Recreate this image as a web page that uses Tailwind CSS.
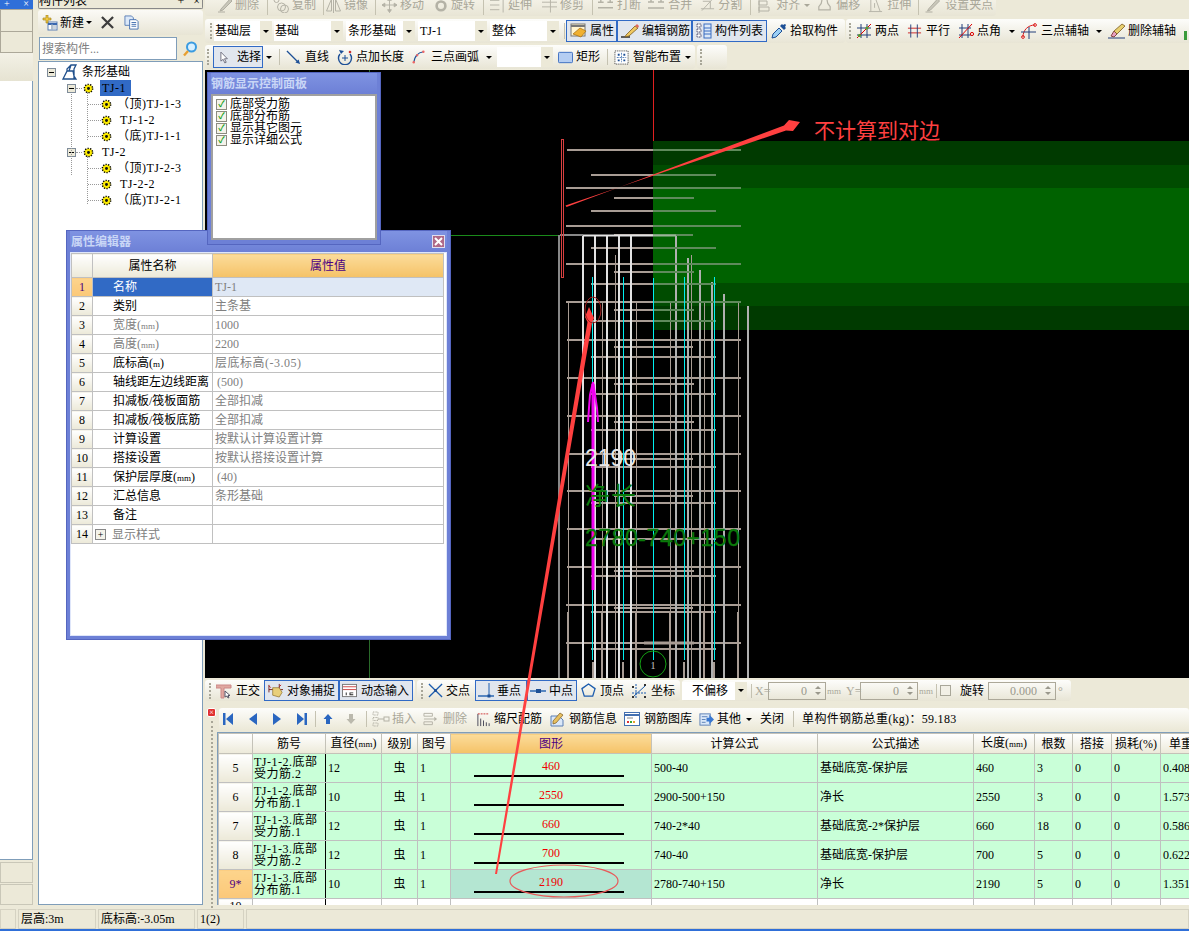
<!DOCTYPE html>
<html lang="zh-CN">
<head>
<meta charset="UTF-8">
<title>钢筋算量</title>
<script src="https://cdn.jsdelivr.net/npm/@tailwindcss/browser@4"></script>
</head>
<body class="relative w-[1189px] h-[931px] overflow-hidden bg-[#ece9d8] text-black text-[12px] leading-[14px] font-['Liberation_Serif','Noto_Sans_CJK_SC',serif]">

<!-- icon symbols -->
<svg class="hidden" width="0" height="0">
  <defs>
    <symbol id="gear" viewBox="0 0 12 12"><circle cx="6" cy="6" r="4.5" fill="#ffee00" stroke="#000" stroke-width="1.6" stroke-dasharray="1.4 1.4"/><circle cx="6" cy="6" r="1.6" fill="#111"/></symbol>
    <symbol id="minus" viewBox="0 0 9 9"><rect x=".5" y=".5" width="8" height="8" fill="#ece9d8" stroke="#7f8c9a"/><path d="M2 4.5h5" stroke="#000"/></symbol>
    <symbol id="root" viewBox="0 0 16 16"><path d="M1 15 5 7V5l4-4h5L12 5v7l2 3zM5 7h6l1 5v3M9 1 7 7" fill="#fff" stroke="#20508c" stroke-width="1.3"/></symbol>
    <symbol id="new" viewBox="0 0 16 16"><rect x="6" y="7" width="9" height="8" fill="#fff" stroke="#5a7fb5"/><path d="M6 9h9" stroke="#3a68b0" stroke-width="2"/><path d="M9 11h5M9 13h5M10 9v6" stroke="#9ab"/><path d="M4 0h2v3h3v2H6v3H4V5H1V3h3z" fill="#f0c840" stroke="#9a7a10" stroke-width=".6"/></symbol>
    <symbol id="del" viewBox="0 0 14 14"><path d="M1 1l12 12M13 1 1 13" stroke="#3c3c3c" stroke-width="2.4"/></symbol>
    <symbol id="copy" viewBox="0 0 16 16"><path d="M1 1h7l2 2v8H1z" fill="#dbe8f8" stroke="#5a7fb5"/><path d="M6 5h7l2 2v8H6z" fill="#fff" stroke="#4470b0"/><path d="M8 8h5M8 10h5M8 12h5" stroke="#4470b0"/></symbol>
    <symbol id="search" viewBox="0 0 16 16"><circle cx="9.5" cy="6" r="4.5" fill="#d8f0ff" stroke="#3a9be0" stroke-width="2"/><path d="M6 10 2 14.5" stroke="#e8a030" stroke-width="2.4"/></symbol>
    <symbol id="cursor" viewBox="0 0 10 14"><path d="M1 1v10l2.5-2 1.8 4 1.6-.7L5 8.4h3.2z" fill="#fff" stroke="#667"/></symbol>
    <symbol id="line" viewBox="0 0 16 16"><path d="M1 1 13 13" stroke="#1c4f96" stroke-width="1.4"/><path d="M15 15l-5-1.6 3.4-3.4z" fill="#1c4f96"/></symbol>
    <symbol id="ptlen" viewBox="0 0 16 16"><path d="M3 5a6.5 6.5 0 1 0 10 0" fill="none" stroke="#1c4f96" stroke-width="1.4"/><path d="M2 1l5 1-3 3z" fill="#1c4f96"/><path d="M8 6v6M5 9h6" stroke="#1c4f96"/><circle cx="13" cy="3" r="1.3" fill="#c33"/></symbol>
    <symbol id="arc" viewBox="0 0 16 16"><path d="M2 14C3 7 7 3 13 2" fill="none" stroke="#1c4f96" stroke-width="1.3"/><circle cx="2" cy="14" r="1.4" fill="#e66"/><circle cx="6" cy="6" r="1.3" fill="#e66"/><circle cx="13" cy="2" r="1.4" fill="#e66"/></symbol>
    <symbol id="rect" viewBox="0 0 16 16"><rect x=".5" y="2.5" width="15" height="11" rx="1" fill="#b4cdf2" stroke="#3a6cc0"/></symbol>
    <symbol id="smart" viewBox="0 0 16 16"><rect x="1" y="1" width="14" height="14" fill="#fff" stroke="#333" stroke-dasharray="1 1"/><path d="M8 3v10M3 8h10" stroke="#5580b8" stroke-dasharray="2 1"/><path d="M4 4h2v2H4zM10 4h2v2h-2zM4 10h2v2H4zM10 10h2v2h-2z" fill="#1c4f96"/></symbol>
    <symbol id="prop" viewBox="0 0 18 16"><rect x="1" y="1" width="14" height="12" fill="#fff4d0" stroke="#777"/><path d="M1 3h14" stroke="#777" stroke-width="2"/><path d="M3 11 10 5l6 3-5 6z" fill="#f0b030" stroke="#a06a10" stroke-width=".7"/></symbol>
    <symbol id="edit" viewBox="0 0 20 16"><path d="M1 14h9" stroke="#222" stroke-width="1.4"/><path d="M6 12 15 3l3 2-9 8-4 1z" fill="#f0c860" stroke="#7a5a20" stroke-width=".8"/><path d="M15 3l3 2 1-2-2-2z" fill="#e06a5a"/></symbol>
    <symbol id="list" viewBox="0 0 16 16"><path d="M1 1h4v3H1zM1 6h4v3H1zM1 11h4v3H1z" fill="#fff" stroke="#446" stroke-dasharray="1 .6"/><rect x="8" y="1" width="7" height="14" fill="#dbe8f8" stroke="#3a6cc0"/><path d="M8 5h7M8 8h7M8 11h7" stroke="#3a6cc0"/></symbol>
    <symbol id="pick" viewBox="0 0 16 16"><path d="M1 15l1-4 6-6 3 3-6 6z" fill="#9cd0f5" stroke="#1c4f96"/><path d="M9 3l4 4 2-2-1-1 1-2-1-1-2 1-1-1z" fill="#1c4f96"/></symbol>
    <symbol id="two" viewBox="0 0 16 16"><path d="M1 5h14M1 12h14M5 1v14M11 1v14" stroke="#223e7a"/><path d="M1 15 15 1" stroke="#d00"/><circle cx="3.5" cy="12.5" r="1.6" fill="#5a9a2a"/><circle cx="11" cy="5" r="1.6" fill="#5a9a2a"/></symbol>
    <symbol id="par" viewBox="0 0 16 16"><path d="M1 5h14M1 10h14" stroke="#c22"/><path d="M4 1v14M11 1v14" stroke="#223e7a"/></symbol>
    <symbol id="ang" viewBox="0 0 16 16"><path d="M1 5h12M1 12h12M4 1v14M10 1v14" stroke="#223e7a"/><path d="M1 15 14 1" stroke="#d00"/><circle cx="14" cy="11" r="1.6" fill="none" stroke="#d00"/></symbol>
    <symbol id="ax3" viewBox="0 0 16 16"><path d="M2 14C2 7 7 2 14 2" fill="none" stroke="#d22"/><path d="M0 9h15M8 4v12" stroke="#223e7a"/><circle cx="2" cy="14" r="1.4" fill="none" stroke="#d22"/><circle cx="14" cy="2" r="1.4" fill="none" stroke="#d22"/></symbol>
    <symbol id="erase" viewBox="0 0 18 16"><path d="M0 15h17" stroke="#223e7a"/><path d="M3 13l3-5 3 3-3 3z" fill="#e8a0c0" stroke="#844"/><path d="M6 8l8-7 3 2-8 8z" fill="#e8d070" stroke="#7a5a20" stroke-width=".8"/></symbol>
    <symbol id="ortho" viewBox="0 0 16 16"><path d="M0 2h15v3H8v10H5V5H0z" fill="#e0a8a0" stroke="#c88"/><path d="M9 8v6l2-1 1 2 1-.5-1-2h2z" fill="#fff" stroke="#556"/></symbol>
    <symbol id="snap" viewBox="0 0 16 16"><path d="M1 2v8M12 1v6M1 7h15" stroke="#7a2222"/><path d="M5 5l7 0 3 5-3 5-7-2z" fill="#e8cf7a" stroke="#8a6a20" stroke-width=".7"/><path d="M1 3l2 2M14 2l-2 2" stroke="#b22"/></symbol>
    <symbol id="dyn" viewBox="0 0 16 16"><rect x=".5" y="1.5" width="15" height="13" fill="#fff" stroke="#777"/><path d="M1 4h14M1 7h14" stroke="#c44"/><path d="M4 10h1v3H4zM8 10h4v1H9v1h3v1H8z" fill="#222"/></symbol>
    <symbol id="cross" viewBox="0 0 16 16"><path d="M1 1l14 14M15 1 1 15" stroke="#1c5cae" stroke-width="1.4"/><rect x="6.5" y="6.5" width="3" height="3" fill="#1c4f96"/></symbol>
    <symbol id="perp" viewBox="0 0 16 16"><path d="M0 13h16" stroke="#1c5cae" stroke-width="1.4"/><path d="M11 0v14" stroke="#1c5cae"/><rect x="9.5" y="11.5" width="3" height="3" fill="#1c4f96"/></symbol>
    <symbol id="mid" viewBox="0 0 16 16"><path d="M0 8h16" stroke="#1c5cae" stroke-width="1.4"/><rect x="6" y="6" width="5" height="4" fill="#1c4f96"/></symbol>
    <symbol id="vert" viewBox="0 0 16 16"><path d="M8 1l7 5-2.5 8h-9L1 6z" fill="none" stroke="#1c5cae" stroke-width="1.4"/></symbol>
    <symbol id="coord" viewBox="0 0 16 16"><path d="M5 1v14M1 10h14" stroke="#1c5cae" stroke-dasharray="2 1"/><path d="M2 14 14 3" stroke="#1c5cae"/><path d="M1 3h2v2H1zM1 13h2v2H1zM13 1h2v2h-2zM13 13h2v2h-2z" fill="#333"/></symbol>
    <symbol id="first" viewBox="0 0 12 14"><path d="M1 1h2.5v12H1zM11 1v12L4 7z" fill="#2a66c0"/></symbol>
    <symbol id="prev" viewBox="0 0 10 14"><path d="M9 1v12L1 7z" fill="#2a66c0"/></symbol>
    <symbol id="next" viewBox="0 0 10 14"><path d="M1 1v12l8-6z" fill="#2a66c0"/></symbol>
    <symbol id="last" viewBox="0 0 12 14"><path d="M11 1H8.500v12H11zM1 1v12l7-6z" fill="#2a66c0"/></symbol>
    <symbol id="up" viewBox="0 0 10 12"><path d="M5 1l4.500 5H7v5H3V6H.5z" fill="#2a66c0"/></symbol>
    <symbol id="down" viewBox="0 0 10 12"><path d="M5 11l4.500-5H7V1H3v5H.5z" fill="#bbb9ad"/></symbol>
    <symbol id="ins" viewBox="0 0 18 16"><path d="M1 1h5v3H1zM1 12h5v3H1zM1 6.500h5v3H1z" fill="none" stroke="#b4b2a6" stroke-dasharray="1 .6"/><path d="M6 8h6" stroke="#b4b2a6"/><rect x="12" y="6" width="5" height="4" fill="none" stroke="#b4b2a6"/></symbol>
    <symbol id="rmv" viewBox="0 0 16 16"><path d="M1 2h9v3H1zM1 11h9v3H1z" fill="none" stroke="#b4b2a6"/><path d="M1 8h11" stroke="#b4b2a6"/><path d="M12 5.500 15 8l-3 2.500z" fill="#b4b2a6"/></symbol>
    <symbol id="scale" viewBox="0 0 16 16"><path d="M2 2v13M5 7v8M8 9v6M11 11v4M14 12v3" stroke="#445"/><path d="M2 2h12" stroke="#c33" stroke-dasharray="2 1"/></symbol>
    <symbol id="info" viewBox="0 0 16 16"><path d="M2 5h8l4 4v6H2z" fill="#dbe8f8" stroke="#5a7fb5"/><path d="M4 10 11 2l3 2-7 8-3 1z" fill="#e8c060" stroke="#7a5a20" stroke-width=".7"/></symbol>
    <symbol id="lib" viewBox="0 0 16 16"><rect x=".5" y="1.500" width="15" height="13" fill="#fff" stroke="#4470b0"/><path d="M1 4h14" stroke="#4470b0" stroke-width="2"/><path d="M3 7h6" stroke="#888"/><path d="M3 11h2" stroke="#d33" stroke-width="2"/><path d="M6 11h2" stroke="#3a3" stroke-width="2"/><path d="M9 11h2" stroke="#e8a030" stroke-width="2"/></symbol>
    <symbol id="other" viewBox="0 0 16 16"><rect x="1" y="2" width="11" height="12" fill="#dbe8f8" stroke="#5a7fb5"/><path d="M3 5h6M3 8h4M3 11h4" stroke="#5a7fb5"/><path d="M8 6h3V3l5 5-5 5v-3H8z" fill="#3a78d0"/></symbol>
    <symbol id="dis-pen" viewBox="0 0 16 16"><path d="M1 15h7M4 12 13 2l2 2-9 9-3 1z" fill="#c9c7ba" stroke="#b0aea2"/></symbol>
    <symbol id="dis-copy" viewBox="0 0 16 16"><circle cx="3" cy="3" r="2.500" fill="none" stroke="#b4b2a6"/><circle cx="8" cy="10" r="4" fill="none" stroke="#b4b2a6"/><circle cx="11" cy="12" r="4" fill="none" stroke="#b4b2a6"/></symbol>
    <symbol id="dis-mirror" viewBox="0 0 16 16"><path d="M8 0v16M6 14H1l5-12zM10 14h5L10 2z" fill="none" stroke="#b4b2a6"/></symbol>
    <symbol id="dis-move" viewBox="0 0 16 16"><path d="M8 0v16M0 8h16M8 0 6 3h4zM8 16l-2-3h4zM0 8l3-2v4zM16 8l-3-2v4z" fill="#b4b2a6" stroke="#b4b2a6"/></symbol>
    <symbol id="dis-rot" viewBox="0 0 16 16"><circle cx="8" cy="9" r="5" fill="none" stroke="#b4b2a6" stroke-width="3"/></symbol>
    <symbol id="dis-ext" viewBox="0 0 16 16"><path d="M0 3h10M0 8h10M0 13h10M14 0v16" stroke="#b4b2a6"/></symbol>
    <symbol id="dis-trim" viewBox="0 0 16 16"><path d="M0 5h16M0 10h16M9 0v16" stroke="#b4b2a6"/></symbol>
    <symbol id="dis-break" viewBox="0 0 16 16"><path d="M0 5h6M10 5h6M0 11h16M3 0v5M13 0v5" stroke="#b4b2a6" stroke-width="1.500"/></symbol>
    <symbol id="dis-split" viewBox="0 0 16 16"><path d="M1 12h14M3 4h8v8M14 1 2 14" stroke="#b4b2a6" fill="none"/></symbol>
    <symbol id="dis-align" viewBox="0 0 12 16"><path d="M1 0v16M1 4h8v4H1zM1 10h10v4H1z" stroke="#b4b2a6" fill="none"/></symbol>
    <symbol id="dis-off" viewBox="0 0 16 16"><path d="M5 1h6l1 5 3 4v4H1v-4l3-4z" fill="none" stroke="#b4b2a6" stroke-width="1.500"/></symbol>
    <symbol id="dis-str" viewBox="0 0 16 16"><path d="M1 15h14M3 15V1h5l5 14M7 6v5" stroke="#b4b2a6" fill="none"/></symbol>
  </defs>
</svg>

<div class="flex h-[908px]">
  <!-- far left docked pane -->
  <div class="w-[33px] shrink-0 flex flex-col">
    <div class="h-[9px] bg-[#2f6fd8] flex items-start justify-between px-[4px] text-white text-[10px] leading-[8px]"><span>+</span><span>×</span></div>
    <div class="h-[23px] border border-[#aca899] bg-[#ece9d8]"></div>
    <div class="h-[21px] border border-[#aca899] border-t-0 bg-[#ece9d8]"></div>
    <div class="h-[28px] bg-linear-to-b from-[#f3f1e6] to-[#e6e3d2]"></div>
    <div class="h-[779px] bg-white border-r border-b border-[#7f9db9]"></div>
    <div class="mt-[2px] h-[21px] border border-[#c9c7b8] bg-[#ece9d8]"></div>
    <div class="mt-[1px] h-[21px] border border-[#c9c7b8] bg-[#ece9d8]"></div>
  </div>

  <!-- component list pane -->
  <div class="ml-[5px] w-[165px] shrink-0 flex flex-col">
    <div class="h-[9px] overflow-hidden border border-t-0 border-[#888] rounded-b-[2px] bg-[#ece9d8] flex justify-between pr-[2px]">
      <span class="-mt-[6px]">构件列表</span><span class="-mt-[6px] flex gap-[9px]"><span>+</span><span>×</span></span>
    </div>
    <div class="mt-[1px] h-[25px] rounded-[3px] bg-linear-to-b from-[#fbfaf6] to-[#e8e5d5] flex items-center pl-[4px]">
      <svg class="w-[16px] h-[16px]"><use href="#new"/></svg>
      <span class="ml-[2px]">新建</span>
      <span class="ml-[2px] w-0 h-0 border-x-[3px] border-x-transparent border-t-[3px] border-t-black"></span>
      <svg class="ml-[9px] w-[13px] h-[13px]"><use href="#del"/></svg>
      <svg class="ml-[10px] w-[15px] h-[15px]"><use href="#copy"/></svg>
    </div>
    <div class="mt-[1px] h-[25px] flex items-center">
      <div class="w-[138px] h-[23px] ml-[1px] bg-white border border-[#7f9db9] text-[#808080] flex items-center pl-[2px] text-[12px]">搜索构件...</div>
      <div class="ml-[5px] w-[16px] h-[16px]"><svg class="w-[16px] h-[16px]"><use href="#search"/></svg></div>
    </div>
    <!-- tree -->
    <div class="relative flex-1 bg-white border border-[#7f9db9] pt-[2px] mb-[3px] tracking-[0.5px]">
      <div class="absolute left-[32px] top-[28px] h-[85px] border-l border-dotted border-[#999]"></div>
      <div class="absolute left-[48px] top-[30px] h-[48px] border-l border-dotted border-[#999]"></div>
      <div class="absolute left-[48px] top-[94px] h-[48px] border-l border-dotted border-[#999]"></div>
      <div class="h-[16px] flex items-center pl-[8px] tracking-normal"><svg class="w-[9px] h-[9px]"><use href="#minus"/></svg><svg class="ml-[6px] w-[16px] h-[16px]"><use href="#root"/></svg><span class="ml-[4px]">条形基础</span></div>
      <div class="h-[16px] flex items-center pl-[28px]"><svg class="relative w-[9px] h-[9px]"><use href="#minus"/></svg><span class="w-[6px] border-t border-dotted border-[#999]"></span><svg class="w-[11px] h-[11px] ml-[1px]"><use href="#gear"/></svg><span class="ml-[6px] w-[31px] h-[16px] bg-[#316ac5] flex items-center pl-[2px]">TJ-1</span></div>
      <div class="h-[16px] flex items-center pl-[49px]"><span class="w-[13px] border-t border-dotted border-[#999]"></span><svg class="w-[11px] h-[11px]"><use href="#gear"/></svg><span class="ml-[5px]">（顶)TJ-1-3</span></div>
      <div class="h-[16px] flex items-center pl-[49px]"><span class="w-[13px] border-t border-dotted border-[#999]"></span><svg class="w-[11px] h-[11px]"><use href="#gear"/></svg><span class="ml-[8px]">TJ-1-2</span></div>
      <div class="h-[16px] flex items-center pl-[49px]"><span class="w-[13px] border-t border-dotted border-[#999]"></span><svg class="w-[11px] h-[11px]"><use href="#gear"/></svg><span class="ml-[5px]">（底)TJ-1-1</span></div>
      <div class="h-[16px] flex items-center pl-[28px]"><svg class="w-[9px] h-[9px]"><use href="#minus"/></svg><span class="w-[6px] border-t border-dotted border-[#999]"></span><svg class="w-[11px] h-[11px] ml-[1px]"><use href="#gear"/></svg><span class="ml-[8px]">TJ-2</span></div>
      <div class="h-[16px] flex items-center pl-[49px]"><span class="w-[13px] border-t border-dotted border-[#999]"></span><svg class="w-[11px] h-[11px]"><use href="#gear"/></svg><span class="ml-[5px]">（顶)TJ-2-3</span></div>
      <div class="h-[16px] flex items-center pl-[49px]"><span class="w-[13px] border-t border-dotted border-[#999]"></span><svg class="w-[11px] h-[11px]"><use href="#gear"/></svg><span class="ml-[8px]">TJ-2-2</span></div>
      <div class="h-[16px] flex items-center pl-[49px]"><span class="w-[13px] border-t border-dotted border-[#999]"></span><svg class="w-[11px] h-[11px]"><use href="#gear"/></svg><span class="ml-[5px]">（底)TJ-2-1</span></div>
    </div>
  </div>

  <!-- main column -->
  <div class="ml-[2px] flex-1 min-w-0 flex flex-col">
    <!-- disabled edit toolbar -->
    <div class="h-[19px] shrink-0">
      <div class="w-[791px] h-[16px] overflow-hidden rounded-b-[3px] bg-linear-to-b from-[#f3f1e6] to-[#e8e5d5] text-[#a9a799] whitespace-nowrap">
        <div class="flex items-center h-[24px] -mt-[7px]">
          <svg class="ml-[12px] w-[16px] h-[16px] shrink-0"><use href="#dis-pen"/></svg><span class="ml-[2px]">删除</span><i class="ml-[8px] w-px h-[20px] bg-[#c5c2b1]"></i>
          <svg class="ml-[5px] w-[17px] h-[16px] shrink-0"><use href="#dis-copy"/></svg><span class="ml-[2px]">复制</span><i class="ml-[7px] w-px h-[20px] bg-[#c5c2b1]"></i>
          <svg class="ml-[1px] w-[17px] h-[16px] shrink-0"><use href="#dis-mirror"/></svg><span class="ml-[2px]">镜像</span><i class="ml-[7px] w-px h-[20px] bg-[#c5c2b1]"></i>
          <svg class="ml-[6px] w-[15px] h-[16px] shrink-0"><use href="#dis-move"/></svg><span class="ml-[3px]">移动</span>
          <svg class="ml-[10px] w-[14px] h-[16px] shrink-0"><use href="#dis-rot"/></svg><span class="ml-[3px]">旋转</span><i class="ml-[8px] w-px h-[20px] bg-[#c5c2b1]"></i>
          <svg class="ml-[6px] w-[15px] h-[16px] shrink-0"><use href="#dis-ext"/></svg><span class="ml-[3px]">延伸</span>
          <svg class="ml-[10px] w-[15px] h-[16px] shrink-0"><use href="#dis-trim"/></svg><span class="ml-[3px]">修剪</span><i class="ml-[8px] w-px h-[20px] bg-[#c5c2b1]"></i>
          <svg class="ml-[5px] w-[15px] h-[16px] shrink-0"><use href="#dis-break"/></svg><span class="ml-[4px]">打断</span>
          <svg class="ml-[7px] w-[16px] h-[16px] shrink-0"><use href="#dis-break"/></svg><span class="ml-[4px]">合并</span>
          <svg class="ml-[8px] w-[15px] h-[16px] shrink-0"><use href="#dis-split"/></svg><span class="ml-[3px]">分割</span><i class="ml-[8px] w-px h-[20px] bg-[#c5c2b1]"></i>
          <svg class="ml-[7px] w-[12px] h-[16px] shrink-0"><use href="#dis-align"/></svg><span class="ml-[6px]">对齐</span><span class="ml-[4px] w-0 h-0 border-x-[3px] border-x-transparent border-t-[3px] border-t-[#a9a799]"></span>
          <svg class="ml-[8px] w-[13px] h-[16px] shrink-0"><use href="#dis-off"/></svg><span class="ml-[5px]">偏移</span>
          <svg class="ml-[8px] w-[15px] h-[16px] shrink-0"><use href="#dis-str"/></svg><span class="ml-[4px]">拉伸</span><i class="ml-[7px] w-px h-[20px] bg-[#c5c2b1]"></i>
          <svg class="ml-[5px] w-[17px] h-[16px] shrink-0"><use href="#dis-pen"/></svg><span class="ml-[4px]">设置夹点</span>
        </div>
      </div>
    </div>

    <!-- selector + layout toolbar -->
    <div class="h-[24px] shrink-0 flex whitespace-nowrap">
      <div class="w-[640px] rounded-[3px] bg-linear-to-b from-[#fdfdfb] to-[#e8e5d5] flex items-center">
        <i class="ml-[5px] w-[2px] h-[16px] border-l-2 border-dotted border-[#a8a698]"></i>
        <div class="ml-[2px] w-[58px] h-[20px] bg-white flex items-center pl-[1px]"><span class="flex-1">基础层</span><span class="w-[12px] h-full bg-[#ece9d8] flex items-center justify-center"><b class="w-0 h-0 border-x-[3px] border-x-transparent border-t-[3px] border-t-black"></b></span></div>
        <div class="ml-[2px] w-[69px] h-[20px] bg-white flex items-center pl-[1px]"><span class="flex-1">基础</span><span class="w-[12px] h-full bg-[#ece9d8] flex items-center justify-center"><b class="w-0 h-0 border-x-[3px] border-x-transparent border-t-[3px] border-t-black"></b></span></div>
        <div class="ml-[3px] w-[69px] h-[20px] bg-white flex items-center pl-[2px]"><span class="flex-1">条形基础</span><span class="w-[12px] h-full bg-[#ece9d8] flex items-center justify-center"><b class="w-0 h-0 border-x-[3px] border-x-transparent border-t-[3px] border-t-black"></b></span></div>
        <div class="ml-[3px] w-[69px] h-[20px] bg-white flex items-center pl-[2px]"><span class="flex-1">TJ-1</span><span class="w-[12px] h-full bg-[#ece9d8] flex items-center justify-center"><b class="w-0 h-0 border-x-[3px] border-x-transparent border-t-[3px] border-t-black"></b></span></div>
        <div class="ml-[3px] w-[69px] h-[20px] bg-white flex items-center pl-[2px]"><span class="flex-1">整体</span><span class="w-[12px] h-full bg-[#ece9d8] flex items-center justify-center"><b class="w-0 h-0 border-x-[3px] border-x-transparent border-t-[3px] border-t-black"></b></span></div>
        <i class="ml-[5px] w-px h-[16px] bg-[#c5c2b1]"></i>
        <div class="ml-[1px] w-[51px] h-[22px] border border-[#316ac5] bg-[#e1e6ee] flex items-center pl-[3px]"><svg class="w-[18px] h-[16px]"><use href="#prop"/></svg><span class="ml-[2px]">属性</span></div>
        <div class="w-[75px] h-[22px] border border-[#316ac5] bg-[#e1e6ee] flex items-center pl-[2px]"><svg class="w-[20px] h-[16px]"><use href="#edit"/></svg><span class="ml-[2px]">编辑钢筋</span></div>
        <div class="w-[75px] h-[22px] border border-[#316ac5] bg-[#e1e6ee] flex items-center pl-[3px]"><svg class="w-[16px] h-[16px]"><use href="#list"/></svg><span class="ml-[3px]">构件列表</span></div>
        <svg class="ml-[4px] w-[16px] h-[16px]"><use href="#pick"/></svg><span class="ml-[3px]">拾取构件</span>
      </div>
      <div class="ml-[1px] flex-1 rounded-l-[3px] bg-linear-to-b from-[#fdfdfb] to-[#e8e5d5] flex items-center overflow-hidden">
        <i class="ml-[3px] w-[2px] h-[16px] border-l-2 border-dotted border-[#a8a698]"></i>
        <svg class="ml-[5px] w-[16px] h-[16px]"><use href="#two"/></svg><span class="ml-[3px]">两点</span>
        <svg class="ml-[8px] w-[15px] h-[16px]"><use href="#par"/></svg><span class="ml-[4px]">平行</span>
        <svg class="ml-[8px] w-[16px] h-[16px]"><use href="#ang"/></svg><span class="ml-[3px]">点角</span>
        <b class="ml-[8px] w-0 h-0 border-x-[3px] border-x-transparent border-t-[3px] border-t-black"></b>
        <svg class="ml-[6px] w-[16px] h-[16px]"><use href="#ax3"/></svg><span class="ml-[4px]">三点辅轴</span>
        <b class="ml-[7px] w-0 h-0 border-x-[3px] border-x-transparent border-t-[3px] border-t-black"></b>
        <svg class="ml-[6px] w-[18px] h-[16px]"><use href="#erase"/></svg><span class="ml-[2px]">删除辅轴</span>
        <i class="ml-[8px] mt-[8px] w-[3px] h-[9px] bg-[#3a9a3a]"></i>
      </div>
    </div>

    <!-- drawing toolbar -->
    <div class="mt-[2px] h-[24px] shrink-0 flex whitespace-nowrap">
      <div class="w-[490px] rounded-[3px] bg-linear-to-b from-[#fdfdfb] to-[#e8e5d5] flex items-center">
        <i class="ml-[2px] w-[2px] h-[16px] border-l-2 border-dotted border-[#a8a698]"></i>
        <div class="ml-[4px] w-[50px] h-[22px] border border-[#316ac5] bg-[#e1e6ee] flex items-center pl-[6px]"><svg class="w-[9px] h-[13px]"><use href="#cursor"/></svg><span class="ml-[8px]">选择</span></div>
        <b class="ml-[3px] w-0 h-0 border-x-[3px] border-x-transparent border-t-[3px] border-t-black"></b>
        <i class="ml-[7px] w-px h-[16px] bg-[#c5c2b1]"></i>
        <svg class="ml-[6px] w-[15px] h-[15px]"><use href="#line"/></svg><span class="ml-[4px]">直线</span>
        <svg class="ml-[8px] w-[16px] h-[16px]"><use href="#ptlen"/></svg><span class="ml-[3px]">点加长度</span>
        <svg class="ml-[8px] w-[14px] h-[14px]"><use href="#arc"/></svg><span class="ml-[5px]">三点画弧</span>
        <b class="ml-[7px] w-0 h-0 border-x-[3px] border-x-transparent border-t-[3px] border-t-black"></b>
        <div class="ml-[5px] w-[56px] h-[20px] bg-white flex items-center justify-end"><span class="w-[12px] h-full bg-[#ece9d8] flex items-center justify-center"><b class="w-0 h-0 border-x-[3px] border-x-transparent border-t-[3px] border-t-black"></b></span></div>
        <svg class="ml-[5px] w-[15px] h-[15px]"><use href="#rect"/></svg><span class="ml-[3px]">矩形</span>
        <i class="ml-[7px] w-px h-[16px] bg-[#c5c2b1]"></i>
        <svg class="ml-[6px] w-[15px] h-[15px]"><use href="#smart"/></svg><span class="ml-[4px]">智能布置</span>
        <b class="ml-[4px] w-0 h-0 border-x-[3px] border-x-transparent border-t-[3px] border-t-black"></b>
      </div>
      <div class="ml-[2px] w-[30px] rounded-[3px] bg-linear-to-b from-[#fdfdfb] to-[#e8e5d5] flex items-center">
        <i class="ml-[3px] w-[2px] h-[16px] border-l-2 border-dotted border-[#a8a698]"></i>
      </div>
    </div>

    <!-- drawing canvas -->
    <div class="mt-[1px] h-[608px] shrink-0 bg-black overflow-hidden">
      <svg class="block" width="984" height="608" viewBox="205 70 984 608" fill="none">
        <defs>
          <clipPath id="gz"><rect x="653" y="141" width="536" height="189"/></clipPath>
          <path id="hbars" d="M567 150H741M566 188H741M566 226H741M566 264H741M566 302H741M567 340H741M567 378H741M567 416H741M567 454H741M567 491H741M567 529H741M567 567H741M566 605H741M566 643H741M591 175H716M591 211H716M591 248H716M591 284H716M591 321H716M591 357H716M591 394H716M591 430H716M591 467H716M591 503H716M591 539H716M591 576H716M591 612H716M591 649H716M614 198H694M614 235H693M614 272H694M614 310H694M614 347H693M614 384H694M614 422H694M614 459H693M614 496H693M614 571H694M614 608H693" stroke-width="2"/>
          <path id="vthin" d="M568.500 302V678M602.500 302V678M636.500 302V678M670.500 302V678M704.500 302V678M738.500 302V678M615.500 255V678M691.500 255V678"/>
          <path id="vstub" d="M568 612V678M602 612V678M636 612V678M670 612V678M704 612V678M738 612V678M593 662V678M623 662V678M684 662V678M714 662V678" stroke-width="2"/>
          <path id="vwhite" d="M583 236V678M595 236V678M607 236V678M619 236V678M631 236V678" stroke-width="2"/>
          <path id="vgray" d="M676 236V678M688 258V678M700 270V678M712 282V678M724 294V678M748 306V678" stroke-width="2"/>
        </defs>
        <rect x="653" y="141" width="536" height="24" fill="#003a00"/>
        <rect x="653" y="165" width="536" height="23" fill="#004c00"/>
        <rect x="653" y="188" width="536" height="95" fill="#006200"/>
        <rect x="653" y="283" width="536" height="23" fill="#004c00"/>
        <rect x="653" y="306" width="536" height="24" fill="#003a00"/>
        <path d="M653.500 70V141" stroke="#e02020"/>
        <path d="M369.500 70V73M369.500 640V678" stroke="#2a6a2a"/>
        <path d="M205 235.500H559" stroke="#1a8a1a"/>
        <path d="M560 235H583" stroke="#888" stroke-width="2"/>
        <path d="M559 235V678" stroke="#888" stroke-width="2"/>
        <use href="#vthin" stroke="#a89c94"/>
        <use href="#hbars" stroke="#a89c94"/>
        <use href="#vstub" stroke="#a89c94"/>
        <use href="#vwhite" stroke="#e2e2e2"/>
        <use href="#vgray" stroke="#b0b0b0"/>
        <use href="#hbars" stroke="#5f8a5c" clip-path="url(#gz)"/>
        <path d="M583 235.500H653" stroke="#e2e2e2" stroke-width="2"/>
        <path d="M653 235.500H676" stroke="#9ab598" stroke-width="2"/>
        <path d="M644 643H694" stroke="#a89c94" stroke-width="3"/>
        <path d="M592.500 277V660M623.500 277V660M653.500 278V660M684.500 277V660M714.500 277V660" stroke="#00f0f0"/>
        <path d="M593 384V590" stroke="#f000f0" stroke-width="3"/>
        <path d="M593 382 590 395 589 408 588 422M593 382 595 395 597 408 598 422M593 382V410" stroke="#f000f0" stroke-width="2"/>
        <rect x="561.500" y="139.500" width="2" height="138" stroke="#d84040"/>
        <circle cx="653" cy="664" r="13" stroke="#14a014"/>
        <text x="653" y="669" fill="#bbb" font-size="11" text-anchor="middle">1</text>
        <text x="585" y="466" fill="#e8e8e8" font-size="23" font-family="Liberation Sans" textLength="51">2190</text>
        <text x="585" y="505" fill="#0a7a0a" font-size="25" textLength="51">净长</text>
        <text x="585" y="546" fill="#0a7a0a" stroke="#0a7a0a" stroke-width=".3" font-size="23" font-family="Liberation Sans" textLength="155">2780-740+150</text>
      </svg>
    </div>

    <!-- snap toolbar -->
    <div class="mt-[2px] h-[21px] shrink-0 flex whitespace-nowrap">
      <div class="w-[210px] rounded-[3px] bg-linear-to-b from-[#fdfdfb] to-[#e8e5d5] flex items-center">
        <i class="ml-[4px] w-[2px] h-[16px] border-l-2 border-dotted border-[#a8a698]"></i>
        <svg class="ml-[5px] w-[16px] h-[16px]"><use href="#ortho"/></svg><span class="ml-[4px]">正交</span>
        <div class="ml-[4px] w-[75px] h-[21px] border border-[#316ac5] bg-[#e1e6ee] flex items-center pl-[3px]"><svg class="w-[15px] h-[15px]"><use href="#snap"/></svg><span class="ml-[4px]">对象捕捉</span></div>
        <div class="w-[74px] h-[21px] border border-[#316ac5] bg-[#e1e6ee] flex items-center pl-[2px]"><svg class="w-[15px] h-[15px]"><use href="#dyn"/></svg><span class="ml-[4px]">动态输入</span></div>
      </div>
      <div class="ml-[2px] w-[263px] rounded-[3px] bg-linear-to-b from-[#fdfdfb] to-[#e8e5d5] flex items-center">
        <i class="ml-[4px] w-[2px] h-[16px] border-l-2 border-dotted border-[#a8a698]"></i>
        <svg class="ml-[5px] w-[15px] h-[15px]"><use href="#cross"/></svg><span class="ml-[3px]">交点</span>
        <div class="ml-[5px] w-[52px] h-[21px] border border-[#316ac5] bg-[#e1e6ee] flex items-center pl-[2px]"><svg class="w-[16px] h-[16px]"><use href="#perp"/></svg><span class="ml-[3px]">垂点</span></div>
        <div class="w-[50px] h-[21px] border border-[#316ac5] bg-[#e1e6ee] flex items-center pl-[2px]"><svg class="w-[16px] h-[16px]"><use href="#mid"/></svg><span class="ml-[3px]">中点</span></div>
        <svg class="ml-[4px] w-[15px] h-[15px]"><use href="#vert"/></svg><span class="ml-[4px]">顶点</span>
        <svg class="ml-[7px] w-[16px] h-[16px]"><use href="#coord"/></svg><span class="ml-[4px]">坐标</span>
      </div>
      <div class="ml-[2px] w-[389px] rounded-[3px] bg-linear-to-b from-[#fdfdfb] to-[#e8e5d5] flex items-center text-[#a9a799]">
        <div class="w-[65px] h-[18px] bg-white flex items-center text-black"><span class="ml-[10px] flex-1">不偏移</span><span class="w-[12px] h-full bg-[#ece9d8] flex items-center justify-center"><b class="w-0 h-0 border-x-[3px] border-x-transparent border-t-[3px] border-t-black"></b></span></div>
        <i class="ml-[4px] w-px h-[14px] bg-[#c5c2b1]"></i>
        <span class="ml-[3px] w-[12px]">X=</span>
        <div class="ml-[1px] w-[58px] h-[18px] border border-[#aca899] flex items-center justify-end"><span class="mr-[4px] text-[#9a988c]">0</span><span class="w-[14px] flex flex-col items-center gap-[3px]"><b class="w-0 h-0 border-x-[3px] border-x-transparent border-b-[3px] border-b-[#9a988c]"></b><b class="w-0 h-0 border-x-[3px] border-x-transparent border-t-[3px] border-t-[#9a988c]"></b></span></div>
        <span class="ml-[1px] w-[12px] text-[9px]">mm</span>
        <span class="ml-[7px] w-[12px]">Y=</span>
        <div class="ml-[2px] w-[58px] h-[18px] border border-[#aca899] flex items-center justify-end"><span class="mr-[4px] text-[#9a988c]">0</span><span class="w-[14px] flex flex-col items-center gap-[3px]"><b class="w-0 h-0 border-x-[3px] border-x-transparent border-b-[3px] border-b-[#9a988c]"></b><b class="w-0 h-0 border-x-[3px] border-x-transparent border-t-[3px] border-t-[#9a988c]"></b></span></div>
        <span class="ml-[1px] w-[12px] text-[9px]">mm</span>
        <i class="ml-[5px] w-px h-[14px] bg-[#c5c2b1]"></i>
        <span class="ml-[3px] w-[11px] h-[11px] border border-[#a9a799] bg-[#f2f0e6]"></span>
        <span class="ml-[9px] text-black">旋转</span>
        <div class="ml-[4px] w-[68px] h-[18px] border border-[#aca899] flex items-center justify-end"><span class="mr-[4px] text-[#9a988c]">0.000</span><span class="w-[14px] flex flex-col items-center gap-[3px]"><b class="w-0 h-0 border-x-[3px] border-x-transparent border-b-[3px] border-b-[#9a988c]"></b><b class="w-0 h-0 border-x-[3px] border-x-transparent border-t-[3px] border-t-[#9a988c]"></b></span></div>
        <span class="ml-[2px]">°</span>
      </div>
    </div>

    <!-- rebar grid block -->
    <div class="mt-[7px] flex-1 min-h-0 flex">
      <div class="w-[13px] shrink-0 flex flex-col items-center">
        <div class="w-[9px] h-[9px] rounded-[2px] bg-[#e03030] border border-[#fff] text-white text-[8px] leading-[7px] text-center">×</div>
        <div class="mt-[4px] flex-1 w-[2px] border-l-2 border-dotted border-[#a8a698]"></div>
      </div>
      <div class="ml-[1px] flex-1 min-w-0 flex flex-col">
        <div class="h-[22px] shrink-0 rounded-t-[3px] bg-linear-to-b from-[#fdfdfb] to-[#ece9d8] flex items-center whitespace-nowrap">
          <svg class="ml-[3px] w-[12px] h-[14px]"><use href="#first"/></svg>
          <svg class="ml-[14px] w-[10px] h-[14px]"><use href="#prev"/></svg>
          <svg class="ml-[14px] w-[10px] h-[14px]"><use href="#next"/></svg>
          <svg class="ml-[14px] w-[12px] h-[14px]"><use href="#last"/></svg>
          <i class="ml-[7px] w-px h-[16px] bg-[#c5c2b1]"></i>
          <svg class="ml-[7px] w-[10px] h-[12px]"><use href="#up"/></svg>
          <svg class="ml-[13px] w-[10px] h-[12px]"><use href="#down"/></svg>
          <i class="ml-[10px] w-px h-[16px] bg-[#c5c2b1]"></i>
          <svg class="ml-[5px] w-[18px] h-[16px]"><use href="#ins"/></svg><span class="ml-[2px] text-[#a9a799]">插入</span>
          <svg class="ml-[7px] w-[15px] h-[16px]"><use href="#rmv"/></svg><span class="ml-[5px] text-[#a9a799]">删除</span>
          <svg class="ml-[9px] w-[15px] h-[15px]"><use href="#scale"/></svg><span class="ml-[3px]">缩尺配筋</span>
          <svg class="ml-[7px] w-[16px] h-[16px]"><use href="#info"/></svg><span class="ml-[4px]">钢筋信息</span>
          <svg class="ml-[7px] w-[16px] h-[16px]"><use href="#lib"/></svg><span class="ml-[4px]">钢筋图库</span>
          <svg class="ml-[7px] w-[15px] h-[15px]"><use href="#other"/></svg><span class="ml-[3px]">其他</span>
          <b class="ml-[5px] w-0 h-0 border-x-[3px] border-x-transparent border-t-[3px] border-t-black"></b>
          <span class="ml-[8px]">关闭</span>
          <i class="ml-[9px] w-px h-[16px] bg-[#c5c2b1]"></i>
          <span class="ml-[8px] tracking-[0.3px]">单构件钢筋总重(kg)：59.183</span>
        </div>
        <div class="mt-[2px] -ml-[2px] flex-1 overflow-hidden bg-white border-t border-l border-[#7f9db9] mb-[3px]">
          <table class="table-fixed border-collapse w-[1002px]">
            <colgroup><col class="w-[34px]"><col class="w-[73px]"><col class="w-[56px]"><col class="w-[36px]"><col class="w-[33px]"><col class="w-[201px]"><col class="w-[166px]"><col class="w-[156px]"><col class="w-[61px]"><col class="w-[38px]"><col class="w-[39px]"><col class="w-[49px]"><col class="w-[60px]"></colgroup>
            <thead>
              <tr class="h-[20px] bg-linear-to-b from-white to-[#ece9d8] text-center">
                <th class="font-normal border border-[#c4c2b8]"></th>
                <th class="font-normal border border-[#c4c2b8]">筋号</th>
                <th class="font-normal border border-[#c4c2b8]">直径(<span class="text-[9px]">mm</span>)</th>
                <th class="font-normal border border-[#c4c2b8]">级别</th>
                <th class="font-normal border border-[#c4c2b8]">图号</th>
                <th class="font-normal border border-[#c4c2b8] bg-linear-to-b from-[#fbdc9a] to-[#f5c266] text-[#4b0082]">图形</th>
                <th class="font-normal border border-[#c4c2b8]">计算公式</th>
                <th class="font-normal border border-[#c4c2b8]">公式描述</th>
                <th class="font-normal border border-[#c4c2b8]">长度(<span class="text-[9px]">mm</span>)</th>
                <th class="font-normal border border-[#c4c2b8]">根数</th>
                <th class="font-normal border border-[#c4c2b8]">搭接</th>
                <th class="font-normal border border-[#c4c2b8]">损耗(%)</th>
                <th class="font-normal border border-[#c4c2b8] text-left pl-[8px]">单重</th>
              </tr>
            </thead>
            <tbody class="bg-[#c9ffd8]">
              <tr class="h-[29px]">
                <td class="border border-[#c0c0c0] text-center bg-linear-to-b from-white to-[#ece9d8]">5</td>
                <td class="border border-[#c0c0c0] border-r-black px-[1px] leading-[12px] whitespace-nowrap tracking-[0.5px]">TJ-1-2.底部<br>受力筋.2</td>
                <td class="border border-[#c0c0c0] px-[2px]">12</td>
                <td class="border border-[#c0c0c0] text-center">虫</td>
                <td class="border border-[#c0c0c0] px-[2px]">1</td>
                <td class="border border-[#c0c0c0] text-center text-[#f00000]"><div class="leading-[13px]">460</div><div class="mt-[2px] ml-[23px] w-[150px] h-[2px] bg-black"></div></td>
                <td class="border border-[#c0c0c0] px-[2px]">500-40</td>
                <td class="border border-[#c0c0c0] px-[2px]">基础底宽-保护层</td>
                <td class="border border-[#c0c0c0] px-[2px]">460</td>
                <td class="border border-[#c0c0c0] px-[2px]">3</td>
                <td class="border border-[#c0c0c0] px-[2px]">0</td>
                <td class="border border-[#c0c0c0] px-[2px]">0</td>
                <td class="border border-[#c0c0c0] px-[2px]">0.408</td>
              </tr>
              <tr class="h-[29px]">
                <td class="border border-[#c0c0c0] text-center bg-linear-to-b from-white to-[#ece9d8]">6</td>
                <td class="border border-[#c0c0c0] border-r-black px-[1px] leading-[12px] whitespace-nowrap tracking-[0.5px]">TJ-1-2.底部<br>分布筋.1</td>
                <td class="border border-[#c0c0c0] px-[2px]">10</td>
                <td class="border border-[#c0c0c0] text-center">虫</td>
                <td class="border border-[#c0c0c0] px-[2px]">1</td>
                <td class="border border-[#c0c0c0] text-center text-[#f00000]"><div class="leading-[13px]">2550</div><div class="mt-[2px] ml-[23px] w-[150px] h-[2px] bg-black"></div></td>
                <td class="border border-[#c0c0c0] px-[2px]">2900-500+150</td>
                <td class="border border-[#c0c0c0] px-[2px]">净长</td>
                <td class="border border-[#c0c0c0] px-[2px]">2550</td>
                <td class="border border-[#c0c0c0] px-[2px]">3</td>
                <td class="border border-[#c0c0c0] px-[2px]">0</td>
                <td class="border border-[#c0c0c0] px-[2px]">0</td>
                <td class="border border-[#c0c0c0] px-[2px]">1.573</td>
              </tr>
              <tr class="h-[29px]">
                <td class="border border-[#c0c0c0] text-center bg-linear-to-b from-white to-[#ece9d8]">7</td>
                <td class="border border-[#c0c0c0] border-r-black px-[1px] leading-[12px] whitespace-nowrap tracking-[0.5px]">TJ-1-3.底部<br>受力筋.1</td>
                <td class="border border-[#c0c0c0] px-[2px]">12</td>
                <td class="border border-[#c0c0c0] text-center">虫</td>
                <td class="border border-[#c0c0c0] px-[2px]">1</td>
                <td class="border border-[#c0c0c0] text-center text-[#f00000]"><div class="leading-[13px]">660</div><div class="mt-[2px] ml-[23px] w-[150px] h-[2px] bg-black"></div></td>
                <td class="border border-[#c0c0c0] px-[2px]">740-2*40</td>
                <td class="border border-[#c0c0c0] px-[2px]">基础底宽-2*保护层</td>
                <td class="border border-[#c0c0c0] px-[2px]">660</td>
                <td class="border border-[#c0c0c0] px-[2px]">18</td>
                <td class="border border-[#c0c0c0] px-[2px]">0</td>
                <td class="border border-[#c0c0c0] px-[2px]">0</td>
                <td class="border border-[#c0c0c0] px-[2px]">0.586</td>
              </tr>
              <tr class="h-[29px]">
                <td class="border border-[#c0c0c0] text-center bg-linear-to-b from-white to-[#ece9d8]">8</td>
                <td class="border border-[#c0c0c0] border-r-black px-[1px] leading-[12px] whitespace-nowrap tracking-[0.5px]">TJ-1-3.底部<br>受力筋.2</td>
                <td class="border border-[#c0c0c0] px-[2px]">12</td>
                <td class="border border-[#c0c0c0] text-center">虫</td>
                <td class="border border-[#c0c0c0] px-[2px]">1</td>
                <td class="border border-[#c0c0c0] text-center text-[#f00000]"><div class="leading-[13px]">700</div><div class="mt-[2px] ml-[23px] w-[150px] h-[2px] bg-black"></div></td>
                <td class="border border-[#c0c0c0] px-[2px]">740-40</td>
                <td class="border border-[#c0c0c0] px-[2px]">基础底宽-保护层</td>
                <td class="border border-[#c0c0c0] px-[2px]">700</td>
                <td class="border border-[#c0c0c0] px-[2px]">5</td>
                <td class="border border-[#c0c0c0] px-[2px]">0</td>
                <td class="border border-[#c0c0c0] px-[2px]">0</td>
                <td class="border border-[#c0c0c0] px-[2px]">0.622</td>
              </tr>
              <tr class="h-[29px]">
                <td class="border border-[#c0c0c0] text-center bg-linear-to-b from-[#fdd48c] to-[#fbc878] text-[#4b0082]">9*</td>
                <td class="border border-[#c0c0c0] border-r-black px-[1px] leading-[12px] whitespace-nowrap tracking-[0.5px]">TJ-1-3.底部<br>分布筋.1</td>
                <td class="border border-[#c0c0c0] px-[2px]">10</td>
                <td class="border border-[#c0c0c0] text-center">虫</td>
                <td class="border border-[#c0c0c0] px-[2px]">1</td>
                <td class="border border-[#c0c0c0] text-center text-[#f00000] bg-[#b4e6d2]"><div class="leading-[13px]">2190</div><div class="mt-[2px] ml-[23px] w-[150px] h-[2px] bg-black"></div></td>
                <td class="border border-[#c0c0c0] px-[2px]">2780-740+150</td>
                <td class="border border-[#c0c0c0] px-[2px]">净长</td>
                <td class="border border-[#c0c0c0] px-[2px]">2190</td>
                <td class="border border-[#c0c0c0] px-[2px]">5</td>
                <td class="border border-[#c0c0c0] px-[2px]">0</td>
                <td class="border border-[#c0c0c0] px-[2px]">0</td>
                <td class="border border-[#c0c0c0] px-[2px]">1.351</td>
              </tr>
              <tr class="h-[29px] bg-white">
                <td class="border border-[#c0c0c0] text-center align-top bg-linear-to-b from-white to-[#ece9d8]">10</td>
                <td class="border border-[#c0c0c0] border-r-black"></td>
                <td class="border border-[#c0c0c0]"></td><td class="border border-[#c0c0c0]"></td><td class="border border-[#c0c0c0]"></td><td class="border border-[#c0c0c0]"></td><td class="border border-[#c0c0c0]"></td><td class="border border-[#c0c0c0]"></td><td class="border border-[#c0c0c0]"></td><td class="border border-[#c0c0c0]"></td><td class="border border-[#c0c0c0]"></td><td class="border border-[#c0c0c0]"></td><td class="border border-[#c0c0c0]"></td>
              </tr>
            </tbody>
          </table>
        </div>
      </div>
    </div>
  </div>
</div>

<!-- status bar -->
<div class="h-[21px] flex gap-[2px] bg-[#ece9d8] pt-[1px]">
  <div class="w-[16px] border border-[#d5d2c2]"></div>
  <div class="w-[78px] border border-[#d5d2c2] flex items-center pl-[2px]">层高:3m</div>
  <div class="w-[97px] border border-[#d5d2c2] flex items-center pl-[2px]">底标高:-3.05m</div>
  <div class="w-[47px] border border-[#d5d2c2] flex items-center pl-[2px]">1(2)</div>
  <div class="flex-1 border border-[#d5d2c2]"></div>
</div>
<div class="h-[2px] bg-[#2f6fd8]"></div>

<!-- floating: rebar display panel -->
<div class="absolute left-[207px] top-[72px] w-[174px] h-[173px] z-20 bg-[#6d80d6] border border-[#5566c0] px-[3px] pb-[4px] flex flex-col">
  <div class="h-[21px] shrink-0 bg-linear-to-b from-[#7f93e2] to-[#6d80d6] flex items-center pl-0 font-bold text-[#c9d6f6]">钢筋显示控制面板</div>
  <div class="flex-1 bg-white border-2 border-[#a0a0a0] pt-[2px] pl-[3px]">
    <div class="h-[12px] flex items-center"><span class="w-[11px] h-[11px] border border-[#8c8c80] bg-[#f4f3ea] flex items-center justify-center text-[#21a121] text-[9px] font-bold leading-none">✓</span><span class="ml-[3px]">底部受力筋</span></div>
    <div class="h-[12px] flex items-center"><span class="w-[11px] h-[11px] border border-[#8c8c80] bg-[#f4f3ea] flex items-center justify-center text-[#21a121] text-[9px] font-bold leading-none">✓</span><span class="ml-[3px]">底部分布筋</span></div>
    <div class="h-[12px] flex items-center"><span class="w-[11px] h-[11px] border border-[#8c8c80] bg-[#f4f3ea] flex items-center justify-center text-[#21a121] text-[9px] font-bold leading-none">✓</span><span class="ml-[3px]">显示其它图元</span></div>
    <div class="h-[12px] flex items-center"><span class="w-[11px] h-[11px] border border-[#8c8c80] bg-[#f4f3ea] flex items-center justify-center text-[#21a121] text-[9px] font-bold leading-none">✓</span><span class="ml-[3px]">显示详细公式</span></div>
  </div>
</div>

<!-- floating: property editor -->
<div class="absolute left-[66px] top-[230px] w-[385px] h-[410px] z-10 bg-[#6d80d6] border border-[#5566c0] px-[3px] pb-[3px] flex flex-col">
  <div class="h-[21px] shrink-0 bg-linear-to-b from-[#7f93e2] to-[#6d80d6] flex items-center justify-between pl-[1px] pr-[2px] font-bold text-[#c9d6f6]">
    <span>属性编辑器</span>
    <span class="w-[13px] h-[13px] bg-[#b06a88] border border-[#e0e0f0] flex items-center justify-center"><svg class="w-[9px] h-[9px]" viewBox="0 0 9 9"><path d="M1 1l7 7M8 1 1 8" stroke="#fff" stroke-width="2"/></svg></span>
  </div>
  <div class="flex-1 bg-white pr-[1px] border border-[#dfe6fa]">
    <table class="table-fixed border-collapse w-[372px]">
      <colgroup><col class="w-[21px]"><col class="w-[120px]"><col class="w-[231px]"></colgroup>
      <thead>
        <tr class="h-[24px] text-center">
          <th class="font-normal border border-[#c0c0c0] bg-linear-to-b from-white to-[#ece9d8]"></th>
          <th class="font-normal border border-[#c0c0c0] bg-linear-to-b from-white to-[#ece9d8]">属性名称</th>
          <th class="font-normal border border-[#c0c0c0] bg-linear-to-b from-[#fbdc9a] to-[#f5c266] text-[#4b0082]">属性值</th>
        </tr>
      </thead>
      <tbody>
        <tr class="h-[19px]"><td class="border border-[#c0c0c0] text-center bg-linear-to-b from-[#fdd48c] to-[#fbc878] text-[#4b0082]">1</td><td class="border border-[#c0c0c0] pl-[20px] bg-[#316ac5] text-white">名称</td><td class="border border-[#c0c0c0] pl-[2px] bg-[#dfe8f5] text-[#808080]">TJ-1</td></tr>
        <tr class="h-[19px]"><td class="border border-[#c0c0c0] text-center bg-linear-to-b from-white to-[#ece9d8]">2</td><td class="border border-[#c0c0c0] pl-[20px]">类别</td><td class="border border-[#c0c0c0] pl-[2px] text-[#808080]">主条基</td></tr>
        <tr class="h-[19px]"><td class="border border-[#c0c0c0] text-center bg-linear-to-b from-white to-[#ece9d8]">3</td><td class="border border-[#c0c0c0] pl-[20px] text-[#808080]">宽度(<span class="text-[9px]">mm</span>)</td><td class="border border-[#c0c0c0] pl-[2px] text-[#808080]">1000</td></tr>
        <tr class="h-[19px]"><td class="border border-[#c0c0c0] text-center bg-linear-to-b from-white to-[#ece9d8]">4</td><td class="border border-[#c0c0c0] pl-[20px] text-[#808080]">高度(<span class="text-[9px]">mm</span>)</td><td class="border border-[#c0c0c0] pl-[2px] text-[#808080]">2200</td></tr>
        <tr class="h-[19px]"><td class="border border-[#c0c0c0] text-center bg-linear-to-b from-white to-[#ece9d8]">5</td><td class="border border-[#c0c0c0] pl-[20px]">底标高(<span class="text-[9px]">m</span>)</td><td class="border border-[#c0c0c0] pl-[2px] text-[#808080] tracking-[0.5px]">层底标高(-3.05)</td></tr>
        <tr class="h-[19px]"><td class="border border-[#c0c0c0] text-center bg-linear-to-b from-white to-[#ece9d8]">6</td><td class="border border-[#c0c0c0] pl-[20px]">轴线距左边线距离</td><td class="border border-[#c0c0c0] pl-[4px] text-[#808080]">(500)</td></tr>
        <tr class="h-[19px]"><td class="border border-[#c0c0c0] text-center bg-linear-to-b from-white to-[#ece9d8]">7</td><td class="border border-[#c0c0c0] pl-[20px]">扣减板/筏板面筋</td><td class="border border-[#c0c0c0] pl-[2px] text-[#808080]">全部扣减</td></tr>
        <tr class="h-[19px]"><td class="border border-[#c0c0c0] text-center bg-linear-to-b from-white to-[#ece9d8]">8</td><td class="border border-[#c0c0c0] pl-[20px]">扣减板/筏板底筋</td><td class="border border-[#c0c0c0] pl-[2px] text-[#808080]">全部扣减</td></tr>
        <tr class="h-[19px]"><td class="border border-[#c0c0c0] text-center bg-linear-to-b from-white to-[#ece9d8]">9</td><td class="border border-[#c0c0c0] pl-[20px]">计算设置</td><td class="border border-[#c0c0c0] pl-[2px] text-[#808080]">按默认计算设置计算</td></tr>
        <tr class="h-[19px]"><td class="border border-[#c0c0c0] text-center bg-linear-to-b from-white to-[#ece9d8]">10</td><td class="border border-[#c0c0c0] pl-[20px]">搭接设置</td><td class="border border-[#c0c0c0] pl-[2px] text-[#808080]">按默认搭接设置计算</td></tr>
        <tr class="h-[19px]"><td class="border border-[#c0c0c0] text-center bg-linear-to-b from-white to-[#ece9d8]">11</td><td class="border border-[#c0c0c0] pl-[20px]">保护层厚度(<span class="text-[9px]">mm</span>)</td><td class="border border-[#c0c0c0] pl-[4px] text-[#808080]">(40)</td></tr>
        <tr class="h-[19px]"><td class="border border-[#c0c0c0] text-center bg-linear-to-b from-white to-[#ece9d8]">12</td><td class="border border-[#c0c0c0] pl-[20px]">汇总信息</td><td class="border border-[#c0c0c0] pl-[2px] text-[#808080]">条形基础</td></tr>
        <tr class="h-[19px]"><td class="border border-[#c0c0c0] text-center bg-linear-to-b from-white to-[#ece9d8]">13</td><td class="border border-[#c0c0c0] pl-[20px]">备注</td><td class="border border-[#c0c0c0] pl-[2px]"></td></tr>
        <tr class="h-[19px]"><td class="border border-[#c0c0c0] text-center bg-linear-to-b from-white to-[#ece9d8]">14</td><td class="border border-[#c0c0c0] pl-[2px] text-[#808080]"><span class="inline-flex items-center"><span class="w-[11px] h-[11px] border border-[#888] bg-[#f4f3ea] flex items-center justify-center text-black text-[10px] leading-none">+</span><span class="ml-[6px]">显示样式</span></span></td><td class="border border-[#c0c0c0] pl-[2px]"></td></tr>
      </tbody>
    </table>
  </div>
</div>

<!-- hand-drawn annotations lying over everything -->
<svg class="absolute left-0 top-0 z-30 pointer-events-none" width="1189" height="931" viewBox="0 0 1189 931" fill="none">
  <polygon points="565.500,205.500 786,130.500 793,131 800,122 789,120 784,125.500 566.500,207" fill="#ff4040"/>
  <polygon points="495,874 497,874 592,323 594,318 589,307 585,317 587.500,322" fill="#ff4040"/>
  <ellipse cx="593" cy="310" rx="8" ry="13" stroke="#a02020"/>
  <ellipse cx="564" cy="881" rx="54" ry="16" stroke="#e85a5a" stroke-width="1.200"/>
  <text x="814" y="138" fill="#ff4040" font-size="21">不计算到对边</text>
</svg>
</body>
</html>
